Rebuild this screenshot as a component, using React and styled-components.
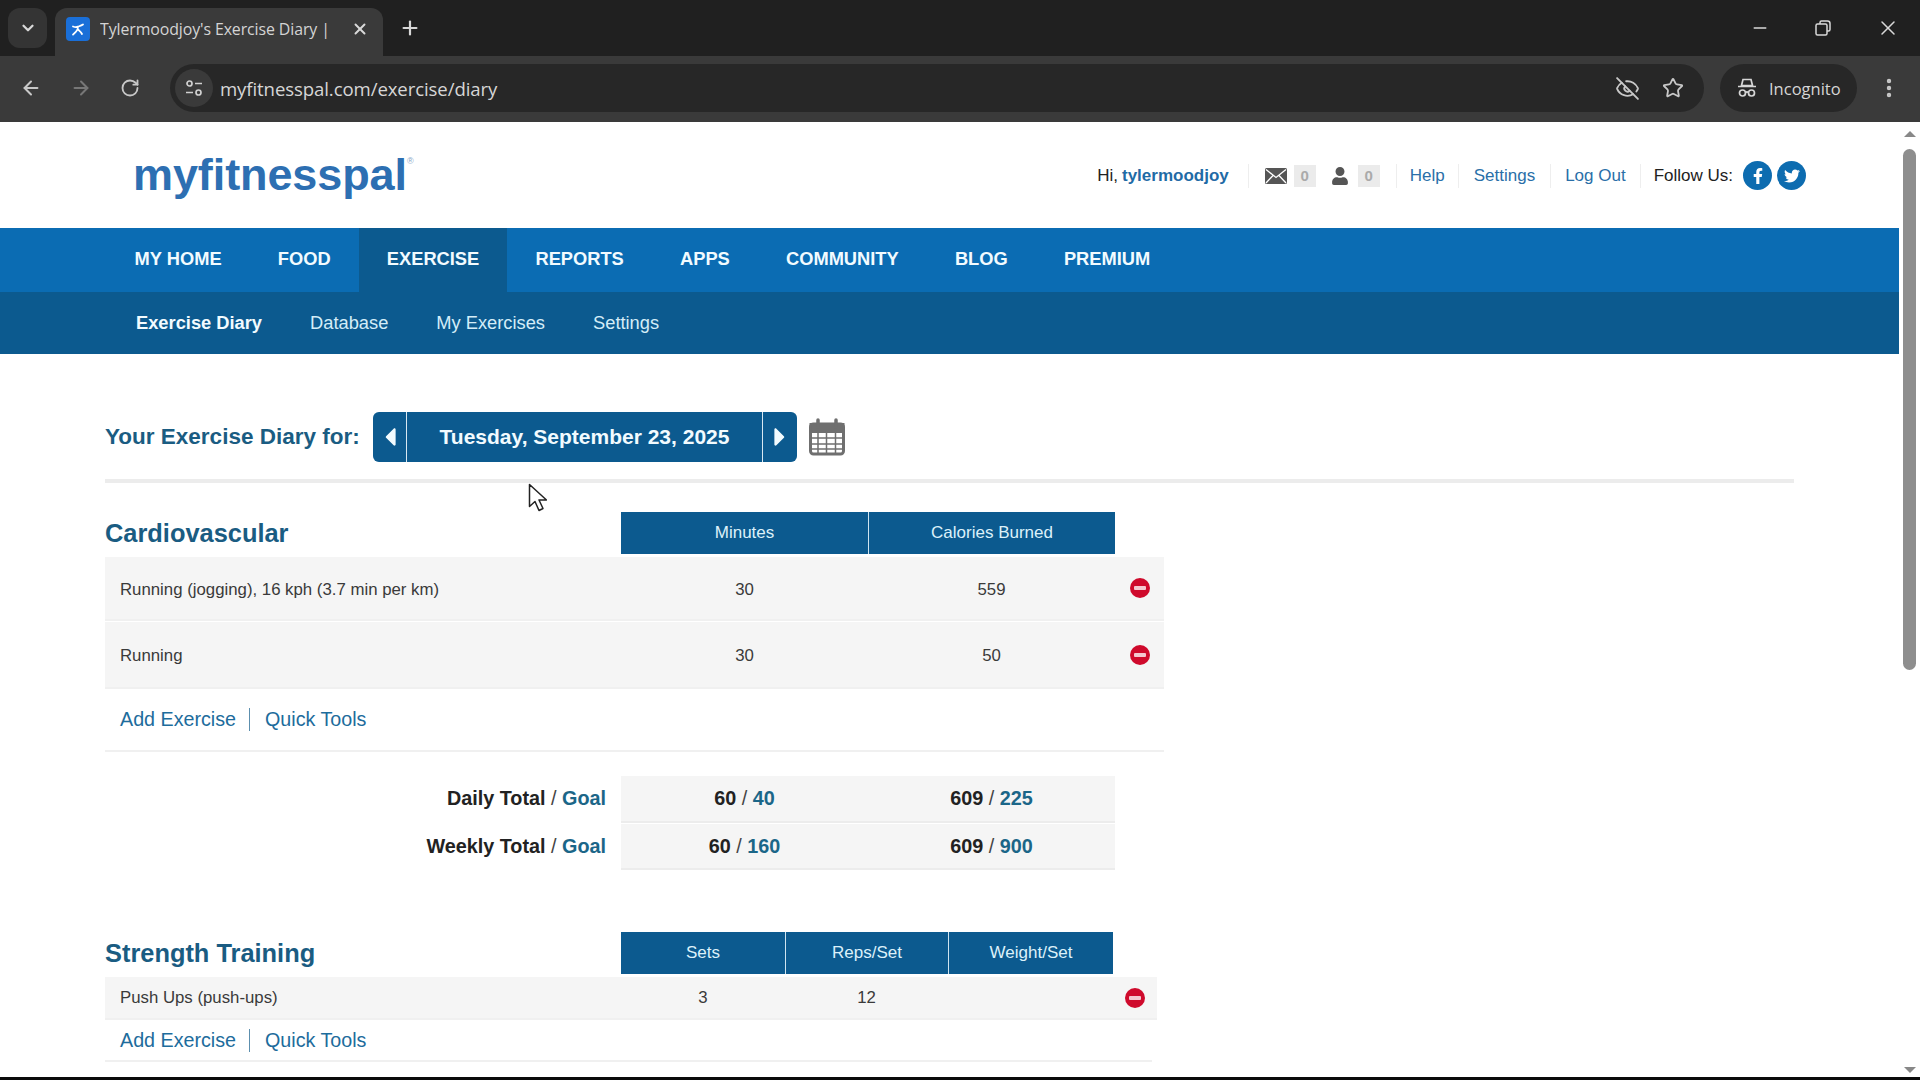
import React from "react";
import styled, { createGlobalStyle } from "styled-components";
import { ChevronDown, X, Plus, ArrowLeft, ArrowRight, RotateCw, EyeOff, Star, MoreVertical, Minus } from "lucide-react";
import { FaFacebookF, FaTwitter, FaUser, FaCaretLeft, FaCaretRight } from "react-icons/fa";

const Global = createGlobalStyle`
  html, body { margin: 0; padding: 0; height: 1080px; overflow: hidden; background: #fff; }
  body { font-family: "Liberation Sans", Arial, sans-serif; }
  * { box-sizing: border-box; }
`;

const Screen = styled.div`
  position: relative;
  width: 1920px;
  height: 1080px;
  display: flex;
  flex-direction: column;
  overflow: hidden;
`;

/* Browser chrome */
const TabStrip = styled.div`
  height: 56px;
  flex: none;
  background: #202020;
  display: flex;
  align-items: flex-end;
  padding-left: 8px;
  color: #d8d8d8;
`;
const TabMenu = styled.div`
  width: 39px;
  height: 40px;
  margin-bottom: 8px;
  border-radius: 12px;
  background: #343434;
  display: flex;
  align-items: center;
  justify-content: center;
`;
const Tab = styled.div`
  width: 328px;
  height: 48px;
  margin-left: 8px;
  border-radius: 12px 12px 0 0;
  background: #3a3a3a;
  display: flex;
  align-items: center;
  padding: 0 14px 6px 11px;
`;
const Favicon = styled.div`
  width: 24px;
  height: 24px;
  border-radius: 4px;
  background: #1a6fd8;
  display: flex;
  align-items: center;
  justify-content: center;
  flex: none;
`;
const TabTitle = styled.span`
  font-family: "Open Sans", sans-serif;
  font-size: 15.9px;
  letter-spacing: -0.1px;
  margin-left: 10px;
  flex: 1;
  white-space: nowrap;
  overflow: hidden;
  color: #d4d4d4;
`;
const NewTab = styled.div`
  margin: 0 0 12px 16px;
  height: 32px;
  display: flex;
  align-items: center;
`;
const WindowControls = styled.div`
  margin-left: auto;
  align-self: flex-start;
  height: 56px;
  display: flex;
  align-items: center;
  gap: 44px;
  padding-right: 20px;
`;
const Toolbar = styled.div`
  height: 66px;
  flex: none;
  background: #3a3a3a;
  display: flex;
  align-items: flex-start;
  padding: 8px 0 0 20px;
  color: #c8c8c8;
`;
const NavButtons = styled.div`
  width: 150px;
  height: 48px;
  display: flex;
  align-items: center;
  gap: 28px;
`;
const Omnibox = styled.div`
  width: 1534px;
  height: 48px;
  border-radius: 24px;
  background: #272727;
  display: flex;
  align-items: center;
  padding: 0 20px 0 0;
`;
const SiteIcon = styled.div`
  width: 38px;
  height: 38px;
  margin-left: 5px;
  border-radius: 50%;
  background: #3a3a3a;
  display: flex;
  align-items: center;
  justify-content: center;
  flex: none;
`;
const Url = styled.span`
  font-family: "Open Sans", sans-serif;
  font-size: 18.6px;
  color: #d6d6d6;
  margin-left: 7px;
  flex: 1;
  letter-spacing: -0.1px;
`;
const OmniIcons = styled.div`
  display: flex;
  align-items: center;
  gap: 22px;
`;
const IncognitoPill = styled.div`
  width: 137px;
  height: 48px;
  margin-left: 16px;
  border-radius: 24px;
  background: #272727;
  display: flex;
  align-items: center;
  gap: 12px;
  padding-left: 17px;
  font-family: "Open Sans", sans-serif;
  font-size: 16.5px;
  color: #d6d6d6;
`;
const MenuDots = styled.div`
  margin: 12px 0 0 20px;
  display: flex;
`;

/* Page */
const Viewport = styled.div`
  flex: 1;
  min-height: 0;
  display: flex;
  background: #fff;
`;
const Page = styled.div`
  width: 1899px;
  flex: none;
  overflow: hidden;
`;
const Scrollbar = styled.div`
  flex: 1;
  display: flex;
  flex-direction: column;
  align-items: center;
  padding: 9px 0 4px;
`;
const ScrollArrow = styled.div`
  width: 0;
  height: 0;
  border-left: 6px solid transparent;
  border-right: 6px solid transparent;
  ${p => p.$down ? "border-top: 6px solid #888;" : "border-bottom: 6px solid #888;"}
  ${p => p.$down ? "margin-top: auto;" : ""}
`;
const ScrollThumb = styled.div`
  width: 13px;
  height: 521px;
  margin-top: 12px;
  border-radius: 7px;
  background: #8e8e8e;
`;
const BottomEdge = styled.div`
  height: 3px;
  flex: none;
  background: #0a0a0a;
`;

const TopBar = styled.header`
  height: 106px;
  display: flex;
  align-items: center;
  padding: 0 93px 0 133px;
`;
const Logo = styled.div`
  font-size: 45px;
  font-weight: 700;
  letter-spacing: -0.1px;
  color: #2d6fb2;
  line-height: 1;
  margin-top: -1px;
  sup { font-size: 9px; font-weight: 400; vertical-align: 26px; color: #8aa8c8; line-height: 0; }
`;
const UserBar = styled.div`
  margin-left: auto;
  display: flex;
  align-items: center;
  font-size: 17px;
  color: #222;
  margin-top: 1px;
`;
const UserGroup = styled.div`
  display: flex;
  align-items: center;
  height: 24px;
  padding: 0 ${p => p.$pad || 14}px;
  border-right: ${p => p.$last ? "none" : "1px solid #eeeeee"};
  padding-right: ${p => p.$last ? 0 : (p.$pad || 14)}px;
`;
const UserName = styled.a`
  font-weight: 700;
  color: #1f6ba6;
  margin-left: 4px;
`;
const TopLink = styled.a`
  color: #2a6fa8;
`;
const CountBadge = styled.span`
  width: 22px;
  height: 22px;
  margin: 0 15px 0 ${p => p.$ml || 7}px;
  background: #ebebeb;
  color: #aaa;
  font-size: 15px;
  font-weight: 700;
  display: flex;
  align-items: center;
  justify-content: center;
  &:last-child { margin-right: 0; }
`;
const SocialCircle = styled.span`
  width: 29px;
  height: 29px;
  border-radius: 50%;
  background: #0d6cb0;
  color: #fff;
  display: flex;
  align-items: center;
  justify-content: center;
  font-size: 16px;
  margin-left: ${p => p.$ml}px;
`;

const MainNav = styled.nav`
  height: 64px;
  padding-left: 106.5px;
  display: flex;
  background: #0b6cb3;
`;
const MainItem = styled.a`
  padding: 0 28.1px 2px;
  display: flex;
  align-items: center;
  font-size: 18.3px;
  font-weight: 700;
  color: #f2fbff;
  background: ${p => p.$active ? "#0c5a8f" : "transparent"};
`;
const SubNav = styled.nav`
  height: 62px;
  padding-left: 136px;
  display: flex;
  align-items: center;
  gap: 48px;
  background: #0c5a8f;
`;
const SubItem = styled.a`
  font-size: 18.3px;
  font-weight: ${p => p.$active ? 700 : 400};
  color: ${p => p.$active ? "#f2fbff" : "#d4edf8"};
`;

const Body = styled.main`
  padding: 58px 0 0 105px;
`;
const DiaryHead = styled.div`
  height: 50px;
  display: flex;
  align-items: center;
`;
const DiaryTitle = styled.h1`
  margin: 0;
  width: 268px;
  font-size: 22.5px;
  font-weight: 700;
  color: #1a5c82;
  white-space: nowrap;
`;
const DatePicker = styled.div`
  width: 424px;
  height: 50px;
  border-radius: 6px;
  overflow: hidden;
  display: grid;
  grid-template-columns: 33px 1fr 34px;
  gap: 1px;
  background: #d8e8f2;
`;
const DateCell = styled.div`
  background: #0c5a8f;
  color: #f2fbff;
  display: flex;
  align-items: center;
  justify-content: center;
  font-size: 21px;
  font-weight: 700;
`;
const CalendarIcon = styled.svg`
  width: 36px;
  height: 38px;
  margin-left: 12px;
`;
const Rule = styled.div`
  width: 1689px;
  height: 4px;
  margin: 17px 0 29px;
  background: #ececec;
`;
const SectionHead = styled.div`
  display: grid;
  grid-template-columns: ${p => p.$cols};
  width: ${p => p.$width}px;
  height: 42px;
  margin-top: ${p => p.$top || 0}px;
`;
const SectionTitle = styled.h2`
  margin: 0;
  align-self: center;
  font-size: 25.4px;
  font-weight: 700;
  color: #1a5c82;
`;
const HeadCell = styled.div`
  background: #0c5a8f;
  color: #dcf1fa;
  font-size: 17px;
  display: flex;
  align-items: center;
  justify-content: center;
  border-left: ${p => p.$divider ? "1px solid #cfe4f0" : "none"};
`;
const RowName = styled.div`
  padding-left: 15px;
  white-space: nowrap;
`;
const RowValue = styled.div`
  text-align: center;
`;
const DataRow = styled.div`
  display: grid;
  grid-template-columns: ${p => p.$cols};
  width: ${p => p.$width}px;
  height: ${p => p.$h}px;
  margin-top: ${p => p.$top || 0}px;
  align-items: center;
  background: #f5f5f5;
  box-shadow: 0 2px 0 #f0f0f0;
  color: #3a3a3a;
  font-size: 16.8px;
  ${RowName}, ${RowValue} { padding-top: ${p => p.$textShift || 0}px; }
`;
const DeleteCell = styled.div`
  display: flex;
  justify-content: center;
`;
const DeleteIcon = styled.span`
  width: 20px;
  height: 20px;
  border-radius: 50%;
  background: #cf0a2c;
  display: flex;
  align-items: center;
  justify-content: center;
  &::after {
    content: "";
    width: 12px;
    height: 4px;
    border-radius: 1px;
    background: #f4c8d0;
  }
`;
const LinkRow = styled.div`
  width: ${p => p.$width}px;
  height: ${p => p.$h}px;
  padding: 2px 0 0 15px;
  display: flex;
  align-items: center;
  border-bottom: 2px solid #f0f0f0;
`;
const ActionLink = styled.a`
  font-size: 19.7px;
  color: #1d6c9c;
  & + & {
    margin-left: 13px;
    padding-left: 15px;
    border-left: 1px solid #5c8fae;
  }
`;
const TotalsRow = styled.div`
  display: grid;
  grid-template-columns: 516px 247px 247px;
  align-items: stretch;
  height: ${p => p.$h}px;
  margin-top: ${p => p.$top || 0}px;
  font-size: 19.8px;
  font-weight: 700;
  color: #222;
`;
const TotalLabel = styled.div`
  display: flex;
  align-items: center;
  justify-content: flex-end;
  padding-right: 15px;
  white-space: pre;
`;
const TotalValue = styled.div`
  display: flex;
  align-items: center;
  justify-content: center;
  background: #f5f5f5;
  box-shadow: 0 2px 0 #ececec;
  white-space: pre;
`;
const Goal = styled.span`
  color: #1b6688;
`;
const Slash = styled.span`
  font-weight: 400;
  color: #444;
`;
const Cursor = styled.svg`
  position: absolute;
  left: 528px;
  top: 483px;
  width: 19px;
  height: 29px;
`;

const mainItems = ["MY HOME", "FOOD", "EXERCISE", "REPORTS", "APPS", "COMMUNITY", "BLOG", "PREMIUM"];
const subItems = ["Exercise Diary", "Database", "My Exercises", "Settings"];
const cardioCols = "516px 247px 247px 49px";
const strengthCols = "516px 164px 163px 165px 44px";

const Total = ({ a, b }) => (
  <TotalValue>{a}<Slash> / </Slash><Goal>{b}</Goal></TotalValue>
);

export default function App() {
  return (
    <Screen>
      <Global />
      <TabStrip>
        <TabMenu><ChevronDown size={18} strokeWidth={3} /></TabMenu>
        <Tab>
          <Favicon>
            <svg width="18" height="18" viewBox="0 0 18 18" fill="none" stroke="#fff" strokeWidth="1.8" strokeLinecap="round">
              <path d="M4 6.5c2 .8 3.5.8 5 .2s3-.9 5-2.2M9 6.8c0 2-.6 3.6-2 4.8l-3 3M9 9.5c1.2 1.2 3 2.5 4 4.5" />
            </svg>
          </Favicon>
          <TabTitle>Tylermoodjoy's Exercise Diary |</TabTitle>
          <X size={18} strokeWidth={2.6} />
        </Tab>
        <NewTab><Plus size={22} strokeWidth={2.4} /></NewTab>
        <WindowControls>
          <Minus size={20} strokeWidth={1.6} />
          <svg width="18" height="18" viewBox="0 0 18 18" fill="none" stroke="#d8d8d8" strokeWidth="1.5">
            <rect x="2" y="5" width="11" height="11" rx="1.5" />
            <path d="M6 5V3.5A1.5 1.5 0 0 1 7.500 2h6A2.500 2.500 0 0 1 16 4.500v6a1.500 1.500 0 0 1-1.500 1.500H13" />
          </svg>
          <X size={24} strokeWidth={1.5} />
        </WindowControls>
      </TabStrip>

      <Toolbar>
        <NavButtons>
          <ArrowLeft size={22} strokeWidth={2.2} />
          <ArrowRight size={22} strokeWidth={2.2} color="#777" />
          <RotateCw size={20} strokeWidth={2.2} />
        </NavButtons>
        <Omnibox>
          <SiteIcon>
            <svg width="20" height="20" viewBox="0 0 20 20" fill="none" stroke="#d0d0d0" strokeWidth="1.7">
              <circle cx="5.500" cy="5.500" r="2.500" />
              <path d="M11 5.500h7M2 14.500h7" />
              <circle cx="14.500" cy="14.500" r="2.500" />
            </svg>
          </SiteIcon>
          <Url>myfitnesspal.com/exercise/diary</Url>
          <OmniIcons>
            <EyeOff size={25} strokeWidth={1.8} />
            <Star size={22} strokeWidth={2} />
          </OmniIcons>
        </Omnibox>
        <IncognitoPill>
          <svg width="20" height="22" viewBox="0 0 20 22" fill="none" stroke="#d6d6d6" strokeWidth="1.7">
            <path d="M6 2.500h8l1.500 6h-11zM1 9.500h18" />
            <circle cx="5.500" cy="16" r="3" />
            <circle cx="14.500" cy="16" r="3" />
            <path d="M8.500 15.500c1-.7 2-.7 3 0" />
          </svg>
          Incognito
        </IncognitoPill>
        <MenuDots><MoreVertical size={24} strokeWidth={2.4} /></MenuDots>
      </Toolbar>

      <Viewport>
        <Page>
          <TopBar>
            <Logo>myfitnesspal<sup>®</sup></Logo>
            <UserBar>
              <UserGroup $pad={19}>Hi,<UserName>tylermoodjoy</UserName></UserGroup>
              <UserGroup $pad={16}>
                <svg width="22" height="16" viewBox="0 0 22 16">
                  <rect width="22" height="16" rx="1.500" fill="#555" />
                  <path d="M1 1.500l10 8 10-8M1 15l7-7.500M21 15l-7-7.500" fill="none" stroke="#fff" strokeWidth="1.300" />
                </svg>
                <CountBadge>0</CountBadge>
                <FaUser size={18} color="#555" />
                <CountBadge $ml={9}>0</CountBadge>
              </UserGroup>
              <UserGroup $pad={13}><TopLink>Help</TopLink></UserGroup>
              <UserGroup $pad={15}><TopLink>Settings</TopLink></UserGroup>
              <UserGroup $pad={14}><TopLink>Log Out</TopLink></UserGroup>
              <UserGroup $last $pad={13}>
                Follow Us:
                <SocialCircle $ml={10}><FaFacebookF /></SocialCircle>
                <SocialCircle $ml={5}><FaTwitter /></SocialCircle>
              </UserGroup>
            </UserBar>
          </TopBar>

          <MainNav>
            {mainItems.map(item => (
              <MainItem key={item} $active={item === "EXERCISE"}>{item}</MainItem>
            ))}
          </MainNav>
          <SubNav>
            {subItems.map((item, i) => (
              <SubItem key={item} $active={i === 0}>{item}</SubItem>
            ))}
          </SubNav>

          <Body>
            <DiaryHead>
              <DiaryTitle>Your Exercise Diary for:</DiaryTitle>
              <DatePicker>
                <DateCell><FaCaretLeft size={30} /></DateCell>
                <DateCell>Tuesday, September 23, 2025</DateCell>
                <DateCell><FaCaretRight size={30} /></DateCell>
              </DatePicker>
              <CalendarIcon viewBox="0 0 36 38" fill="none" stroke="#6f6f6f">
                <rect x="1.500" y="6" width="33" height="30" rx="3" fill="#fff" strokeWidth="3" />
                <rect x="1.500" y="6" width="33" height="8" fill="#6f6f6f" strokeWidth="2" />
                <path d="M1.500 20h33M1.500 26h33M1.500 31h33M9 14v21M17.500 14v21M26.500 14v21" strokeWidth="1.500" />
                <path d="M9 2v7M27 2v7" strokeWidth="3.500" strokeLinecap="round" />
              </CalendarIcon>
            </DiaryHead>
            <Rule />

            <SectionHead $cols="516px 247px 247px" $width={1010}>
              <SectionTitle>Cardiovascular</SectionTitle>
              <HeadCell>Minutes</HeadCell>
              <HeadCell $divider>Calories Burned</HeadCell>
            </SectionHead>
            <DataRow $cols={cardioCols} $width={1059} $h={62} $top={3} $textShift={3}>
              <RowName>Running (jogging), 16 kph (3.7 min per km)</RowName>
              <RowValue>30</RowValue>
              <RowValue>559</RowValue>
              <DeleteCell><DeleteIcon /></DeleteCell>
            </DataRow>
            <DataRow $cols={cardioCols} $width={1059} $h={65} $top={3} $textShift={2}>
              <RowName>Running</RowName>
              <RowValue>30</RowValue>
              <RowValue>50</RowValue>
              <DeleteCell><DeleteIcon /></DeleteCell>
            </DataRow>
            <LinkRow $width={1059} $h={65}>
              <ActionLink>Add Exercise</ActionLink>
              <ActionLink>Quick Tools</ActionLink>
            </LinkRow>

            <TotalsRow $h={45} $top={24}>
              <TotalLabel>Daily Total<Slash> / </Slash><Goal>Goal</Goal></TotalLabel>
              <Total a="60" b="40" />
              <Total a="609" b="225" />
            </TotalsRow>
            <TotalsRow $h={44} $top={3}>
              <TotalLabel>Weekly Total<Slash> / </Slash><Goal>Goal</Goal></TotalLabel>
              <Total a="60" b="160" />
              <Total a="609" b="900" />
            </TotalsRow>

            <SectionHead $cols="516px 164px 163px 165px" $width={1008} $top={64}>
              <SectionTitle>Strength Training</SectionTitle>
              <HeadCell>Sets</HeadCell>
              <HeadCell $divider>Reps/Set</HeadCell>
              <HeadCell $divider>Weight/Set</HeadCell>
            </SectionHead>
            <DataRow $cols={strengthCols} $width={1052} $h={41} $top={3}>
              <RowName>Push Ups (push-ups)</RowName>
              <RowValue>3</RowValue>
              <RowValue>12</RowValue>
              <RowValue />
              <DeleteCell><DeleteIcon /></DeleteCell>
            </DataRow>
            <LinkRow $width={1047} $h={44}>
              <ActionLink>Add Exercise</ActionLink>
              <ActionLink>Quick Tools</ActionLink>
            </LinkRow>
          </Body>
        </Page>
        <Scrollbar>
          <ScrollArrow />
          <ScrollThumb />
          <ScrollArrow $down />
        </Scrollbar>
      </Viewport>
      <BottomEdge />

      <Cursor viewBox="0 0 19 29">
        <path d="M1.500 1.500v22l5.500-5 4 9 4-2-4-8.500h7.500z" fill="#fff" stroke="#222" strokeWidth="1.500" strokeLinejoin="round" />
      </Cursor>
    </Screen>
  );
}
